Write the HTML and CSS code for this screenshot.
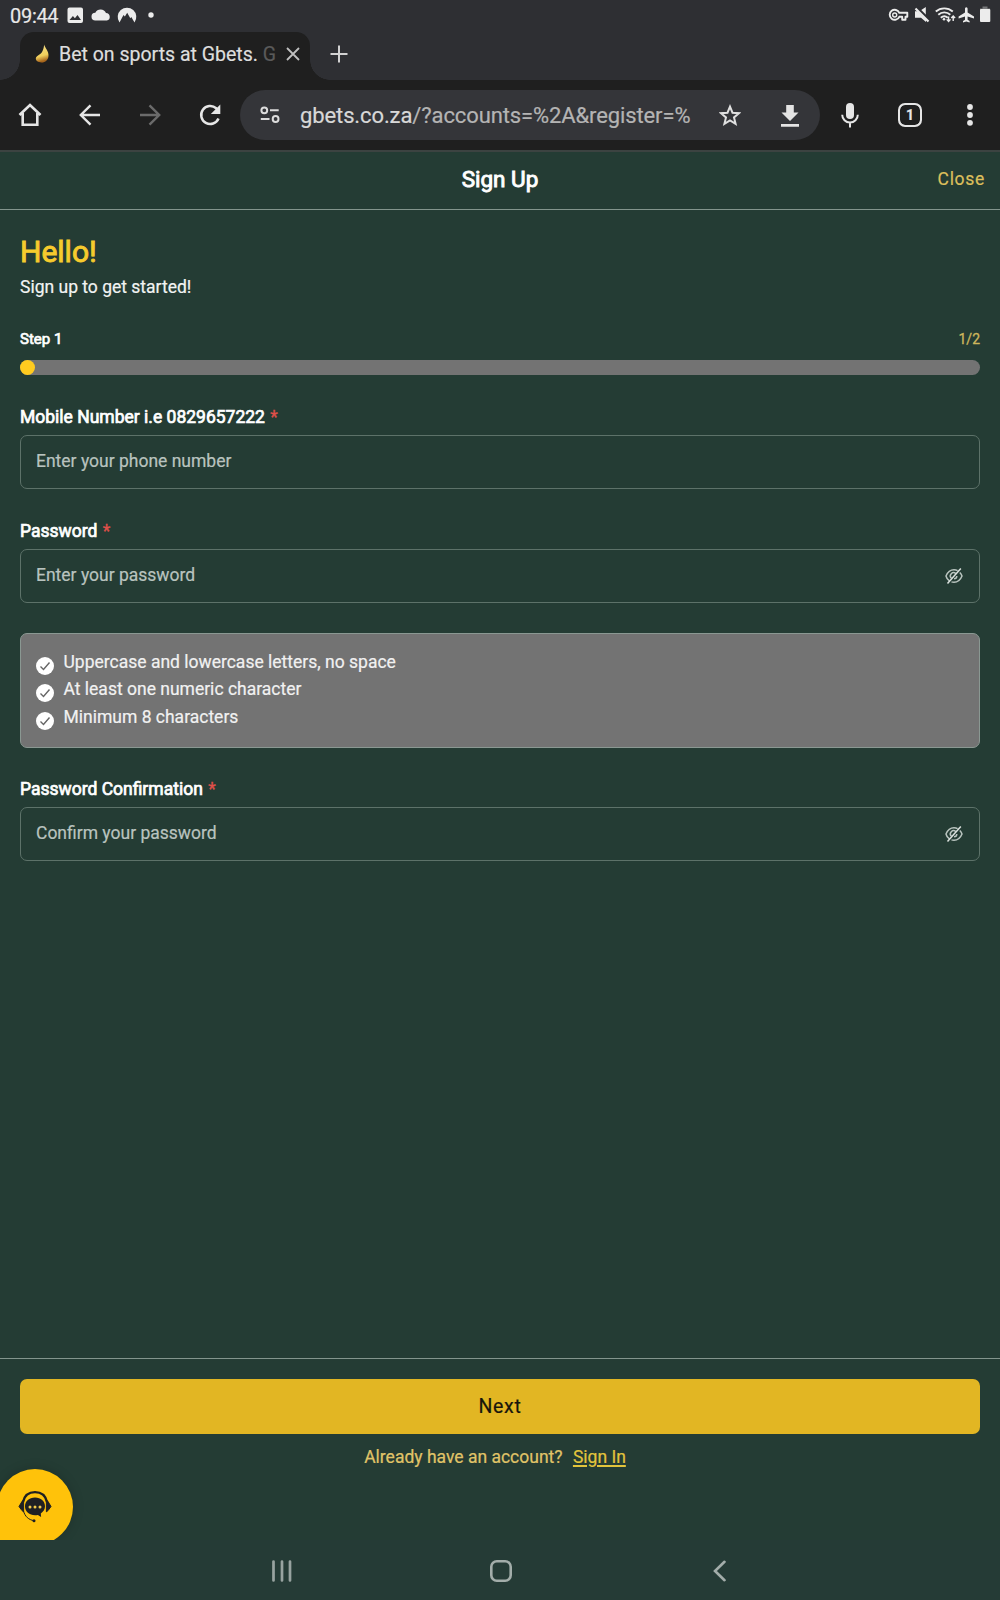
FILE: index.html
```html
<!DOCTYPE html>
<html lang="en">
<head>
<meta charset="utf-8">
<title>Bet on sports at Gbets.</title>
<link rel="stylesheet" href="styles.css">
</head>
<body>
<div class="device">
  <div class="status">
    <span class="clock">09:44</span>
    <svg class="status-left" width="90" height="32" viewBox="66 0 90 32">
      <path fill="#ececec" fill-rule="evenodd" d="M69.5 7.500h11.500a2 2 0 0 1 2 2v11.500a2 2 0 0 1-2 2h-11.500a2 2 0 0 1-2-2v-11.500a2 2 0 0 1 2-2zM69.500 20h11.500l-3.500-5-2.600 3.200-2-2.300z"/>
      <path fill="#ececec" d="M95.500 20.500a3.900 3.900 0 0 1-.2-7.800 6 6 0 0 1 10.700.3 3.800 3.800 0 0 1 .8 7.500z"/>
      <path fill="#ececec" d="M119.500 22.500a9.300 9.300 0 1 1 15 0l-3.200-5.500-1 1.200-3.100-5.400-2.300 3.800-1.400-1.500z"/>
      <circle cx="151" cy="15" r="2.700" fill="#ececec"/>
    </svg>
    <svg class="status-right" width="106" height="32" viewBox="886 0 106 32">
      <path fill="none" stroke="#ececec" stroke-width="1.900" stroke-linejoin="round" d="M899.300 12.800h8v4h-1.800v3h-3.300v-3h-2.900a5 5 0 1 1 0-4z"/>
      <circle cx="894.700" cy="15" r="2" fill="none" stroke="#ececec" stroke-width="1.400"/>
      <path fill="#ececec" d="M915 11.200h2.500l8.500 8.600v2.200l-5-4.200h-6zM920.500 10.500l5.300-3.500v8.800z"/>
      <path stroke="#2e2f33" stroke-width="2.200" d="M916.700 7l12.500 12.500"/>
      <path stroke="#ececec" stroke-width="2.200" d="M915.500 8.500l13 13"/>
      <g fill="none" stroke="#ececec" stroke-width="1.900">
        <path d="M935.800 11.500a13 13 0 0 1 17 0M938.300 14.700a9 9 0 0 1 12 0M940.800 17.800a5.400 5.400 0 0 1 7 0"/>
        <path stroke-width="1.400" d="M948.600 16.500v5M946.700 19.400l1.900 2.100 1.900-2.100M953.200 21v-5M951.300 18l1.900-2 1.900 2"/>
      </g>
      <circle cx="944" cy="19.300" r="1.300" fill="#ececec"/>
      <path fill="#ececec" d="M966.300 7.200c.9 0 1.300.8 1.300 1.700v3.600l6.400 4v1.900l-6.400-2v3.300l2 1.400v1.300l-3.300-1-3.300 1v-1.300l2-1.400v-3.300l-6.400 2v-1.900l6.400-4v-3.600c0-.9.400-1.700 1.300-1.700z"/>
      <path fill="#77787a" d="M982.500 6.500h5v2h2.500v2h-10v-2h2.500z"/>
      <rect x="980" y="9" width="10.300" height="13" rx="1" fill="#ececec"/>
    </svg>
  </div>

  <div class="tabs">
    <div class="tab">
      <svg class="favicon" width="16" height="20" viewBox="0 0 16 20">
        <defs><linearGradient id="gold" x1="0" y1="0" x2="0.200" y2="1"><stop offset="0" stop-color="#f8e08a"/><stop offset=".7" stop-color="#f0cf5c"/><stop offset="1" stop-color="#a8661c"/></linearGradient></defs>
        <path fill="url(#gold)" d="M9.200.4c.4 3 4.800 6.500 4.300 11.500-.4 4-3 6.500-7 6.500C3 18.400.8 16.700.8 14.500c0-2 2-2.800 4-4.300C8 8 8.600 4.500 9.200.4z"/>
      </svg>
      <span class="tab-title">Bet on sports at Gbets. <span class="tab-fade">G</span></span>
      <svg class="tab-close" width="14" height="14" viewBox="0 0 14 14"><path d="M1 1l12 12M13 1L1 13" stroke="#bfbfbf" stroke-width="1.800"/></svg>
    </div>
    <svg class="new-tab" width="18" height="18" viewBox="0 0 18 18"><path d="M9 .5v17M.5 9h17" stroke="#d2d2d2" stroke-width="2"/></svg>
  </div>

  <div class="toolbar">
    <div class="cell"><svg class="home" width="24" height="24" viewBox="0 0 24 24"><path d="M1.500 12L12 2l10.500 10M4.700 10v11.700h14.600V10" fill="none" stroke="#e6e6e6" stroke-width="2.600"/></svg></div>
    <div class="cell"><svg width="22" height="22" viewBox="0 0 22 22"><path d="M21 11H2M11.500 1.300L1.800 11l9.700 9.700" fill="none" stroke="#e6e6e6" stroke-width="2.400"/></svg></div>
    <div class="cell"><svg width="22" height="22" viewBox="0 0 22 22"><path d="M1 11h19M10.500 1.300l9.700 9.700-9.700 9.700" fill="none" stroke="#6b6b6b" stroke-width="2.400"/></svg></div>
    <div class="cell"><svg width="24" height="24" viewBox="0 0 24 24"><path d="M20.500 15.500a9 9 0 1 1-2.300-10.200L20 7" fill="none" stroke="#e6e6e6" stroke-width="2.500"/><path d="M22.300 1.500v9.500h-9.500z" fill="#e6e6e6"/></svg></div>
    <div class="omnibox">
      <svg class="tune" width="20" height="18" viewBox="0 0 20 18"><g fill="none" stroke="#dcdcdc" stroke-width="2"><circle cx="4.300" cy="4.300" r="2.900"/><path d="M10 4.300h8.700M.8 13h8.700"/><circle cx="15.600" cy="13" r="2.900"/></g></svg>
      <span class="url">gbets.co.za<span class="url-path">/?accounts=%2A&amp;register=%</span></span>
      <svg class="star" width="22" height="22" viewBox="0 0 22 22"><path d="M11 2.700l2.500 6 6.500.5-5 4.200 1.600 6.400L11 16.400l-5.600 3.400L7 13.400 2 9.200l6.500-.5z" fill="none" stroke="#e0e0e0" stroke-width="2"/></svg>
      <svg class="download" width="18" height="22" viewBox="0 0 18 22"><path d="M5.200 0h7.600v7.500H17.500L9 16 .5 7.500H5.200zM0 19h18v2.700H0z" fill="#e4e4e4"/></svg>
    </div>
    <div class="cell"><svg width="18" height="25" viewBox="0 0 18 25"><rect x="5" y="0" width="8" height="16" rx="4" fill="#e6e6e6"/><path d="M1.200 11.800a7.800 7.800 0 0 0 15.600 0M9 19.500v5" fill="none" stroke="#e6e6e6" stroke-width="2"/></svg></div>
    <div class="cell"><span class="tab-count">1</span></div>
    <div class="cell"><svg width="6" height="22" viewBox="0 0 6 22" fill="#e6e6e6"><circle cx="3" cy="3" r="2.900"/><circle cx="3" cy="11" r="2.900"/><circle cx="3" cy="18.800" r="2.900"/></svg></div>
  </div>

  <header class="sheet-head">
    <h1 class="sheet-title">Sign Up</h1>
    <a class="close">Close</a>
  </header>

  <main class="content">
    <h2 class="hello">Hello!</h2>
    <p class="lead">Sign up to get started!</p>
    <div class="step"><span class="step-name">Step 1</span><span class="step-count">1/2</span></div>
    <div class="progress"><div class="progress-dot"></div></div>

    <label class="label">Mobile Number i.e 0829657222 <span class="req">*</span></label>
    <div class="field"><input class="input" type="text" placeholder="Enter your phone number"></div>

    <label class="label">Password <span class="req">*</span></label>
    <div class="field"><input class="input" type="password" placeholder="Enter your password">
      <svg class="eye" width="18" height="16" viewBox="0 0 18 16"><g fill="none" stroke="#b9c4bf" stroke-width="1.500"><path d="M4.600 13.200A8.500 8.500 0 0 1 1 8c1.600-4 4.500-6.300 8-6.300 1.300 0 2.500.3 3.600.9M14.800 4.500A9 9 0 0 1 17 8c-1.600 4-4.500 6.300-8 6.300-.9 0-1.700-.1-2.500-.4"/><path d="M6.400 10.300A3 3 0 0 1 10.800 5.600M11.800 8a2.800 2.800 0 0 1-2.800 2.800"/><path d="M2.500 15.500L15.800.5" stroke="#dce2df"/></g></svg>
    </div>

    <ul class="rules">
      <li class="rule"><svg class="check" width="18" height="18" viewBox="0 0 18 18"><circle cx="9" cy="9" r="9" fill="#fff"/><path d="M4.500 9.500l3 3 6-7" fill="none" stroke="#666" stroke-width="1.400"/></svg>Uppercase and lowercase letters, no space</li>
      <li class="rule"><svg class="check" width="18" height="18" viewBox="0 0 18 18"><circle cx="9" cy="9" r="9" fill="#fff"/><path d="M4.500 9.500l3 3 6-7" fill="none" stroke="#666" stroke-width="1.400"/></svg>At least one numeric character</li>
      <li class="rule"><svg class="check" width="18" height="18" viewBox="0 0 18 18"><circle cx="9" cy="9" r="9" fill="#fff"/><path d="M4.500 9.500l3 3 6-7" fill="none" stroke="#666" stroke-width="1.400"/></svg>Minimum 8 characters</li>
    </ul>

    <label class="label label-after-rules">Password Confirmation <span class="req">*</span></label>
    <div class="field"><input class="input" type="password" placeholder="Confirm your password">
      <svg class="eye" width="18" height="16" viewBox="0 0 18 16"><g fill="none" stroke="#b9c4bf" stroke-width="1.500"><path d="M4.600 13.200A8.500 8.500 0 0 1 1 8c1.600-4 4.500-6.300 8-6.300 1.300 0 2.500.3 3.600.9M14.800 4.500A9 9 0 0 1 17 8c-1.600 4-4.500 6.300-8 6.300-.9 0-1.700-.1-2.500-.4"/><path d="M6.400 10.300A3 3 0 0 1 10.800 5.600M11.800 8a2.800 2.800 0 0 1-2.800 2.800"/><path d="M2.500 15.500L15.800.5" stroke="#dce2df"/></g></svg>
    </div>
  </main>

  <footer class="actions">
    <button class="next">Next</button>
    <p class="signin">Already have an account? <a class="signin-link">Sign In</a></p>
    <div class="chat-clip">
      <div class="chat">
        <svg width="34" height="34" viewBox="0 0 34 34">
          <path d="M5 12C6.500 5.500 11 2.200 17 2.200S27.500 5.500 29 12" fill="none" stroke="#1f2023" stroke-width="2.300"/>
          <path d="M5.600 9.800v12L4 20.600 1 16.500l3-5zM28.400 9.800v12l1.600-1.200 3-4.100-3-5z" fill="#1f2023" stroke="#1f2023" stroke-linejoin="round"/>
          <path d="M17 7.500c5.800 0 10 3.700 10 8.800 0 3.300-1.800 5.600-4.200 7.100l.3 3.700-3.200-2.200c-6.800 1.500-12.900-2.400-12.900-8.600 0-5.100 4.200-8.800 10-8.800z" fill="#1f2023"/>
          <g fill="#f3c94a"><circle cx="12" cy="17" r="1.500"/><circle cx="17" cy="17" r="1.500"/><circle cx="22" cy="17" r="1.500"/></g>
          <path d="M5.500 21c1.500 5.500 5 8.700 10.500 9.700" fill="none" stroke="#1f2023" stroke-width="1"/>
          <circle cx="16" cy="30.700" r="1.500" fill="#1f2023"/>
        </svg>
      </div>
    </div>
  </footer>

  <nav class="navbar">
    <svg width="22" height="22" viewBox="0 0 22 22"><path d="M2.500 1.500v19M11 1.500v19M19 1.500v19" stroke="#98a3a0" stroke-width="2.700" stroke-linecap="round"/></svg>
    <svg width="22" height="22" viewBox="0 0 22 22"><rect x="1.300" y="1.300" width="19.400" height="19.400" rx="5.500" fill="none" stroke="#a3adaa" stroke-width="2.600"/></svg>
    <svg width="22" height="22" viewBox="0 0 22 22"><path d="M15.500 1.800L6 11l9.500 9.200" fill="none" stroke="#a3adaa" stroke-width="2.600" stroke-linecap="round"/></svg>
  </nav>
</div>
</body>
</html>
```
FILE: styles.css
```css
* { box-sizing: border-box; }
body {
  margin: 0;
  background: #243c34;
  color: #fff;
  font-family: Roboto, "Liberation Sans", sans-serif;
  -webkit-text-stroke-width: 0.200px;
}
svg { display: block; flex: none; }
h1, h2, p, ul { margin: 0; padding: 0; font-weight: 400; }
.device { width: 1000px; height: 1600px; display: flex; flex-direction: column; overflow: hidden; }

.status { height: 32px; background: #2e2f33; display: flex; justify-content: space-between; padding: 0 8px 0 10px; }
.clock { width: 56px; font-size: 20px; line-height: 32px; color: #e8e8e8; white-space: nowrap; letter-spacing: -0.3px; }
.status-right { margin-left: auto; }

.tabs { height: 48px; background: #2e2f33; display: flex; align-items: center; padding-left: 20px; }
.tab { position: relative; width: 290px; height: 48px; background: #1f1f1f; border-radius: 14px 14px 0 0; display: flex; align-items: center; padding-left: 15px; }
.tab::before, .tab::after { content: ""; position: absolute; bottom: 0; width: 20px; height: 20px; }
.tab::before { left: -20px; background: radial-gradient(circle at 0 0, transparent 19.500px, #1f1f1f 20px); }
.tab::after { right: -20px; background: radial-gradient(circle at 100% 0, transparent 19.500px, #1f1f1f 20px); }
.favicon { margin-top: -4px; }
.tab-title { margin-left: 8px; margin-top: -3px; width: 218px; font-size: 19.500px; line-height: 44px; color: #dedede; white-space: nowrap; letter-spacing: 0; }
.tab-fade { color: #5a5a5a; }
.tab-close { margin-left: 9px; margin-top: -4px; }
.new-tab { margin-left: 20px; margin-top: -4px; }

.toolbar { height: 72px; background: #1f1f1f; border-bottom: 2px solid #3c4341; display: flex; align-items: center; }
.cell { width: 60px; display: flex; align-items: center; justify-content: center; }
.omnibox { width: 580px; height: 50px; border-radius: 25px; background: #343539; display: flex; align-items: center; padding-left: 20px; }
.url { margin-left: 20px; width: 399px; font-size: 22px; line-height: 50px; padding-top: 1px; letter-spacing: -0.110px; color: #d8d8d8; white-space: nowrap; }
.url-path { color: #b4b4b4; }
.star { margin-left: 20px; }
.download { margin-left: 40px; margin-top: 2px; }
.tab-count { width: 24px; height: 24px; outline: 1px solid #e6e6e6; outline-offset: -2px; border: 2px solid #e6e6e6; border-radius: 7px; font-size: 14px; font-weight: 700; line-height: 20px; text-align: center; color: #e6e6e6; }

.sheet-head { height: 58px; border-bottom: 1px solid #83958d; display: grid; grid-template-columns: 1fr auto 1fr; align-items: start; padding: 0 15px; }
.sheet-title { grid-column: 2; font-size: 22.500px; line-height: 54px; -webkit-text-stroke: 0.900px #fff; }
.close { justify-self: end; font-size: 17.500px; line-height: 55px; letter-spacing: 0.700px; color: #dcbf5c; }

.content { flex: 1; padding: 24px 20px 0; }
.hello { font-size: 30px; line-height: 36px; color: #f6cb2d; -webkit-text-stroke: 0.900px #f6cb2d; }
.lead { font-size: 17.500px; line-height: 35px; color: #f2f4f3; }
.step { display: flex; justify-content: space-between; margin-top: 23px; height: 22px; line-height: 22px; }
.step-name { font-size: 15px; -webkit-text-stroke: 0.700px #fff; }
.step-count { font-size: 14px; color: #cdb65c; -webkit-text-stroke-width: 0.300px; }
.progress { margin-top: 10px; height: 15px; border-radius: 8px; background: #737373; }
.progress-dot { width: 15px; height: 15px; border-radius: 50%; background: #ffcb1f; }
.label { display: block; font-size: 17.500px; line-height: 24px; height: 30px; margin-top: 30px; white-space: pre; -webkit-text-stroke: 0.700px #fff; }
.label-after-rules { margin-top: 29.500px; }
.req { margin-left: 1px; color: #e0504a; -webkit-text-stroke: 0.300px #e0504a; }
.field { height: 54px; border: 1px solid #5d7269; border-radius: 7px; display: flex; align-items: center; padding: 0 16px 0 15px; }
.input { flex: 1; height: 52px; border: 0; padding: 0 0 3px; background: none; font: 17.500px/24px Roboto, sans-serif; color: #fff; outline: 0; }
.input::placeholder { color: #b9c3bf; opacity: 1; }
.rules { list-style: none; margin-top: 30px; height: 114.500px; border: 1px solid #8a9892; border-radius: 7px; background: #737373; padding: 15px 14.500px; }
.rule { display: flex; font-size: 17.500px; line-height: 27.400px; color: #f1f1f1; white-space: nowrap; }
.check { margin: 8px 10px 0 0; }

.actions { position: relative; height: 182px; border-top: 1px solid #83958d; padding: 20px 20px 0; }
.next { display: block; width: 100%; height: 55px; border: 0; border-radius: 7px; background: #e2b623; color: #17150c; font: 19.500px/52px Roboto, sans-serif; letter-spacing: 0.700px; padding: 1px 0 0; }
.signin { margin-top: 11px; text-align: center; font-size: 17.500px; line-height: 24px; color: #e0c468; padding-right: 10px; }
.signin-link { margin-left: 6px; color: #e2c43c; text-decoration: underline; text-underline-offset: 2px; text-decoration-thickness: 1.500px; }
.chat-clip { position: absolute; left: 0; bottom: 0; width: 100px; height: 92px; overflow: hidden; }
.chat { position: absolute; left: -3px; top: 21px; width: 76px; height: 76px; border-radius: 38px 38px 38px 0; background: #ffc20a; box-shadow: 0 0 12px rgba(0, 0, 0, 0.180); display: flex; align-items: center; justify-content: center; }

.navbar { height: 60px; background: #253b36; display: flex; padding: 20px 0 0 271px; gap: 197px; }
```
